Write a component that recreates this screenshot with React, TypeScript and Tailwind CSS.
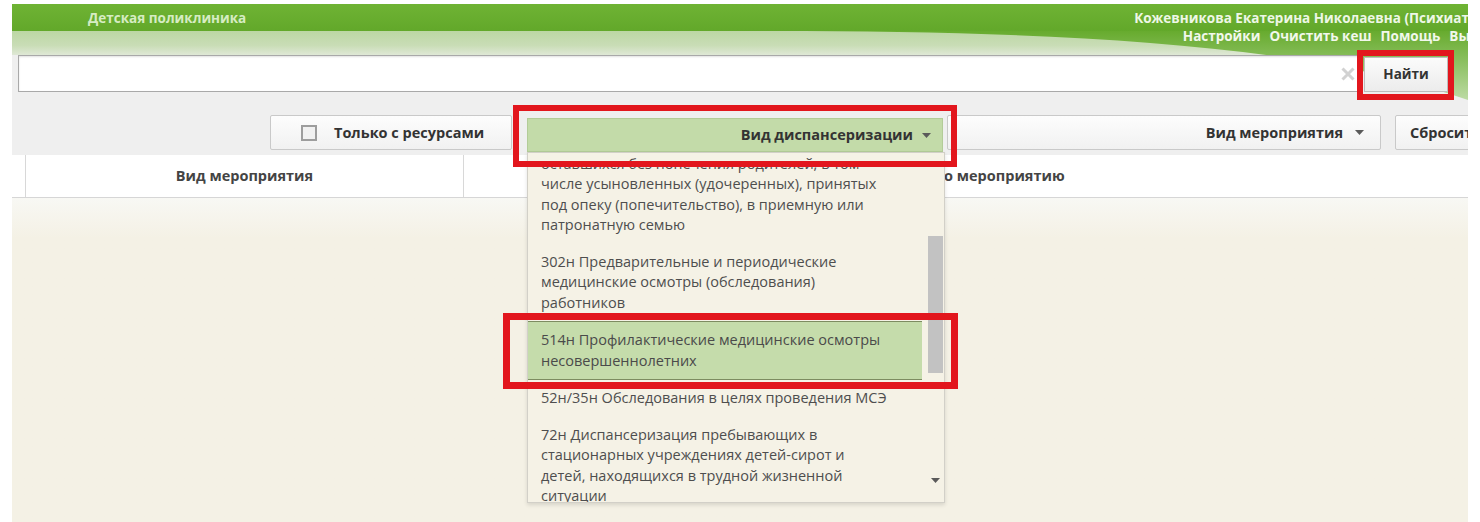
import React, { useEffect, useRef } from "react";

type Option = { lines: string[]; active?: boolean };

const options: Option[] = [
  {
    lines: [
      "216н Диспансеризация детей-сирот и детей,",
      "оставшихся без попечения родителей, в том",
      "числе усыновленных (удочеренных), принятых",
      "под опеку (попечительство), в приемную или",
      "патронатную семью",
    ],
  },
  {
    lines: [
      "302н Предварительные и периодические",
      "медицинские осмотры (обследования)",
      "работников",
    ],
  },
  {
    lines: ["514н Профилактические медицинские осмотры", "несовершеннолетних"],
    active: true,
  },
  { lines: ["52н/35н Обследования в целях проведения МСЭ"] },
  {
    lines: [
      "72н Диспансеризация пребывающих в",
      "стационарных учреждениях детей-сирот и",
      "детей, находящихся в трудной жизненной",
      "ситуации",
    ],
  },
  { lines: ["869н Диспансеризация определенных групп", "взрослого населения"] },
];

const Caret = ({ up = false }: { up?: boolean }) => (
  <svg width="9" height="5" viewBox="0 0 9 5" className="block">
    <path d={up ? "M0 5h9L4.5 0z" : "M0 0h9L4.5 5z"} fill="#5a5a5a" />
  </svg>
);

function HeaderBackground() {
  return (
    <svg
      className="absolute inset-0"
      width="1456"
      height="96"
      viewBox="0 0 1456 96"
      preserveAspectRatio="none"
    >
      <defs>
        <linearGradient id="band" x1="0" y1="0" x2="0" y2="1">
          <stop offset="0" stopColor="#6fb334" />
          <stop offset="1" stopColor="#62a82a" />
        </linearGradient>
        <linearGradient id="light" x1="0" y1="0" x2="0" y2="1">
          <stop offset="0" stopColor="#bcd7a4" />
          <stop offset="0.6" stopColor="#c9ddb6" />
          <stop offset="1" stopColor="#dfe8d6" />
        </linearGradient>
        <linearGradient id="swoosh" x1="0" y1="0" x2="0" y2="1">
          <stop offset="0" stopColor="#67ab2e" />
          <stop offset="0.45" stopColor="#8cc061" />
          <stop offset="1" stopColor="#bddba4" />
        </linearGradient>
      </defs>
      <rect x="0" y="0" width="1456" height="27" fill="url(#band)" />
      <rect x="0" y="27" width="1456" height="24" fill="url(#light)" />
      <path
        d="M760 27 C 1050 27, 1300 40, 1456 96 L 1456 27 Z"
        fill="url(#swoosh)"
      />
    </svg>
  );
}

const plainBtn =
  "shrink-0 h-[35px] flex items-center bg-gradient-to-b from-[#fdfdfd] to-[#f1f1f1] border border-[#c9c9c9] rounded-[2px] text-[14.5px] font-bold text-[#333] whitespace-nowrap";

export default function App() {
  const listRef = useRef<HTMLDivElement>(null);

  // the options list opens already scrolled a little way down
  useEffect(() => {
    if (listRef.current) listRef.current.scrollTop = 28;
  }, []);

  return (
    <div className="w-[1480px] h-[522px] bg-white overflow-hidden font-['Open_Sans',sans-serif] text-[#444]">
      <div className="relative ml-3 mt-1 w-[1456px] h-[518px] overflow-hidden flex flex-col bg-[#f4f1e5]">
        {/* top bar: title, account, search */}
        <header className="relative h-[96px] bg-[#efefef] shrink-0">
          <HeaderBackground />
          <div className="relative flex justify-between h-[27px]">
            <div className="pl-[76px] pt-[6px] text-[13.5px] leading-[16px] font-bold text-[#d6ecc3] whitespace-nowrap">
              Детская поликлиника
            </div>
            <div className="shrink-0 -mr-[27px] pt-[6px] flex flex-col items-end text-[13.5px] leading-[16px] font-bold whitespace-nowrap">
              <span className="mr-[13px] text-[#eef7e6]">
                Кожевникова Екатерина Николаевна (Психиатр)
              </span>
              <span className="mt-[2px] flex gap-[9px] text-[#f2f8ec]">
                <span>Настройки</span>
                <span>Очистить кеш</span>
                <span>Помощь</span>
                <span>Выход</span>
              </span>
            </div>
          </div>
          <div className="relative mt-[24px] flex items-end pl-[6px]">
            <div className="relative shrink-0 w-[1344px] h-[37px] bg-white border border-[#a9a9a9] shadow-[inset_0_1px_2px_rgba(0,0,0,0.12)]">
              <svg
                className="absolute right-[6px] top-[11px]"
                width="14"
                height="14"
                viewBox="0 0 14 14"
              >
                <path d="M1.5 1.5L12.5 12.5M12.5 1.5L1.5 12.5" stroke="#d2d2d2" strokeWidth="3" />
              </svg>
            </div>
            <button className="shrink-0 ml-[2px] w-[84px] h-[35px] bg-gradient-to-b from-[#fbfbfb] to-[#ececec] border border-[#bdbdbd] text-[13.5px] font-bold text-[#333]">
              Найти
            </button>
          </div>
        </header>

        {/* filter toolbar */}
        <div className="relative h-[55px] shrink-0 bg-[#efefef] flex items-start pt-[15px] pl-[258px] z-10">
          <button className={`${plainBtn} w-[242px] pl-[30px] gap-[17px]`}>
            <span className="w-[16px] h-[16px] border-2 border-[#9d9d9d] bg-[#f1f1f1]" />
            Только с ресурсами
          </button>

          <div className="relative shrink-0 ml-[15px] mt-[3px] w-[416px]">
            <button className="w-full h-[34px] flex items-center justify-end gap-[9px] pr-[11px] bg-[#c3dba9] border border-[#b3cc98] text-[14.5px] font-bold text-[#333]">
              Вид диспансеризации
              <Caret />
            </button>

            {/* open options list */}
            <div className="absolute left-0 top-full w-[418px] h-[351px] flex bg-[#f5f2e6] border border-[#d2d0c8] shadow-[0_2px_4px_rgba(0,0,0,0.12)] overflow-hidden">
              <div ref={listRef} className="flex-1 overflow-hidden">
                {options.map((o, i) => (
                  <div
                    key={i}
                    className={
                      o.active
                        ? "mr-[4px] px-[13px] py-[8px] bg-[#c5dcab] border-y border-[#7d8c61] text-[14.5px] leading-[20.5px] text-[#4a4a4a] whitespace-nowrap"
                        : "px-[13px] py-[8px] text-[14.5px] leading-[20.5px] text-[#4e4e4e] whitespace-nowrap"
                    }
                  >
                    {o.lines.map((l, j) => (
                      <div key={j}>{l}</div>
                    ))}
                  </div>
                ))}
              </div>
              <div className="w-[18px] shrink-0 flex flex-col items-center">
                <div className="h-[22px] flex items-center">
                  <Caret up />
                </div>
                <div className="h-[61px]" />
                <div className="w-[15px] h-[137px] bg-[#c2c2c2]" />
                <div className="flex-1" />
                <div className="h-[24px] flex items-start">
                  <Caret />
                </div>
              </div>
            </div>
          </div>

          <button className={`${plainBtn} ml-[4px] w-[434px] justify-end gap-[12px] pr-[16px]`}>
            Вид мероприятия
            <Caret />
          </button>
          <button className={`${plainBtn} ml-[14px] w-[110px] pl-[14px]`}>
            Сбросить
          </button>
        </div>

        {/* table head */}
        <div className="h-[43px] shrink-0 flex bg-white border-b border-[#d6d6d6] text-[14.5px] font-bold text-[#444]">
          <div className="w-[14px] border-r border-[#d8d8d8]" />
          <div className="w-[438px] flex items-center justify-center border-r border-[#d8d8d8]">
            Вид мероприятия
          </div>
          <div className="flex-1 flex items-center pl-[394px] whitespace-nowrap">
            Записано по мероприятию
          </div>
        </div>

        {/* table body */}
        <div className="flex-1 bg-gradient-to-b from-[#f8f8f4] to-[#f4f1e5] to-[40px]" />

        {/* highlight frames */}
        <div className="absolute left-[1345px] top-[46px] w-[97px] h-[50px] border-[6px] border-[#e2161d] z-20" />
        <div className="absolute left-[501px] top-[101px] w-[444px] h-[62px] border-[6px] border-[#e2161d] z-20" />
        <div className="absolute left-[491px] top-[309px] w-[455px] h-[76px] border-[7px] border-[#e2161d] z-20" />
      </div>
    </div>
  );
}
